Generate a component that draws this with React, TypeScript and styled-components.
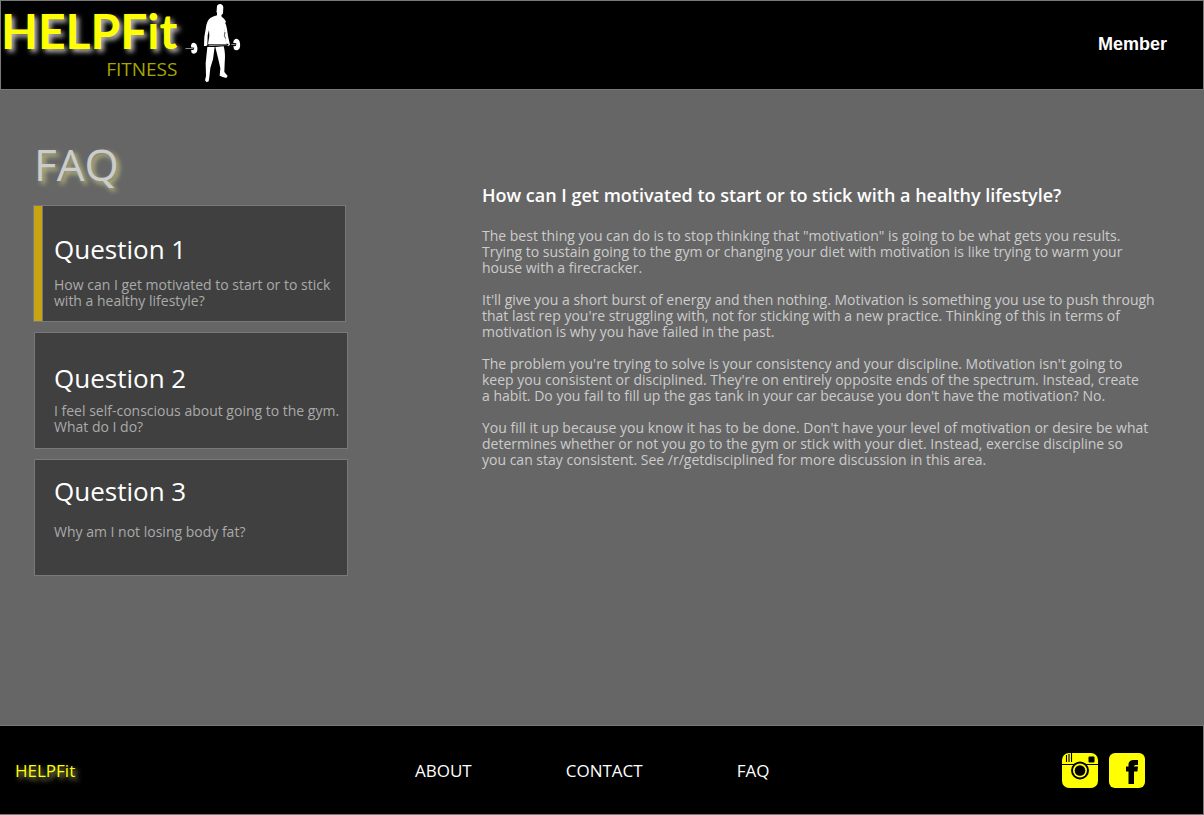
import React, { useState } from "react";
import styled, { createGlobalStyle } from "styled-components";

const GlobalStyle = createGlobalStyle`
  *, *::before, *::after { box-sizing: border-box; }
  body {
    margin: 0;
    background: #666;
    font-family: "Open Sans", "Liberation Sans", sans-serif;
    color: #fff;
  }
  h1, h2, p { margin: 0; }
`;

const Page = styled.div`
  display: flex;
  flex-direction: column;
  min-height: 100vh;
`;

const Header = styled.header`
  display: flex;
  align-items: center;
  justify-content: space-between;
  min-height: 90px;
  padding: 0 36px 0 0;
  background: #000;
  border: 1px solid #797979;
`;

const Brand = styled.a`
  display: flex;
  align-items: center;
  gap: 7px;
  text-decoration: none;
`;

const BrandWords = styled.span`
  display: flex;
  flex-direction: column;
  align-items: flex-end;
  padding-bottom: 4px;
`;

const BrandName = styled.span`
  font-family: Lato, sans-serif;
  font-size: 48px;
  font-weight: 700;
  line-height: 52px;
  color: #ff0;
  text-shadow: 3px 3px 5px rgba(255, 255, 255, 0.75);
`;

const BrandTag = styled.span`
  font-size: 19px;
  line-height: 24px;
  color: #a6a600;
`;

const MemberLink = styled.a`
  padding-bottom: 2px;
  font-family: "Liberation Sans", Arial, sans-serif;
  font-size: 18px;
  font-weight: 700;
  color: #fff;
  text-decoration: none;
`;

const Main = styled.main`
  display: flex;
  flex: 1;
  align-items: flex-start;
  gap: 134px;
  padding: 46px 48px 48px 34px;
`;

const Sidebar = styled.section`
  flex: 0 0 314px;
`;

const Title = styled.h1`
  font-size: 44px;
  font-weight: 500;
  line-height: 56px;
  color: #ccc;
  text-shadow: 3px 3px 5px rgba(255, 255, 153, 0.6);
`;

const Cards = styled.div`
  display: flex;
  flex-direction: column;
  gap: 10px;
  margin-top: 13px;
`;

const Card = styled.button<{ $active: boolean; $top: number; $gap: number }>`
  display: flex;
  flex-direction: column;
  align-items: flex-start;
  gap: ${(p) => p.$gap}px;
  height: 117px;
  margin: ${(p) => (p.$active ? "0 2px 0 -1px" : "0")};
  padding: ${(p) => p.$top}px 0 0 ${(p) => (p.$active ? 20 : 19)}px;
  background: #404040;
  border: 1px solid #797979;
  box-shadow: ${(p) => (p.$active ? "inset 8px 0 0 #c8a415, inset 9px 0 0 #797979" : "none")};
  font-family: inherit;
  text-align: left;
  cursor: pointer;
`;

const CardTitle = styled.span`
  font-size: 26px;
  line-height: 32px;
  color: #fff;
`;

const CardText = styled.span`
  font-size: 14px;
  line-height: 16px;
  white-space: nowrap;
  color: #aaa;
`;

const Answer = styled.article`
  flex: 1;
  padding-top: 47px;
`;

const AnswerTitle = styled.h2`
  font-size: 18px;
  font-weight: 600;
  line-height: 24px;
`;

const AnswerText = styled.p`
  margin-top: 16px;
  font-size: 14px;
  line-height: 16px;
  color: #ccc;

  ${AnswerTitle} + & { margin-top: 21px; }
`;

const Footer = styled.footer`
  display: flex;
  align-items: center;
  min-height: 90px;
  padding: 0 58px 0 15px;
  background: #000;
  border: solid #797979;
  border-width: 1px 1px 1px 0;
  font-size: 17px;
`;

const FooterBrand = styled.a`
  flex: 0 0 400px;
  color: #ff0;
  text-decoration: none;
  text-shadow: 3px 3px 5px rgba(255, 255, 153, 0.75);
`;

const FooterNav = styled.nav`
  display: flex;
  flex: 1;
  gap: 94px;
`;

const FooterLink = styled.a`
  color: #fff;
  text-decoration: none;
`;

const Social = styled.div`
  display: flex;
  gap: 11px;
`;

const SocialLink = styled.a`
  display: flex;
`;

const Lifter = () => (
  <svg width="60" height="88" viewBox="12 3 180 264" aria-hidden="true">
    <g fill="#fff">
      <path d="M111 17Q114 11 122 12Q130 14 130 22L129 40Q128 44 124 45L125 50Q133 54 138 65L136 68L134 90L139 134L84 133L88 108L87 90L83 106L82 138L72 138Q71 112 77 88Q79 62 92 53Q102 49 111 46L111 38Q108 35 110 32Z" />
      <path d="M132 82L137 70Q142 88 144 108L150 134L145 139L139 136L137 120L130 108L134 98Z" />
      <path d="M82 141L104 141L99 178L91 204L88 232L86 244L80 247L75 241L78 228L77 190Z" />
      <path d="M106 141L131 139Q137 160 134 190L133 216L143 228L139 234L128 231L119 227L121 205L116 182Z" />
      <path d="M36 130Q43 125 49 133Q55 147 50 157Q42 165 35 158L33 151L41 149L43 143L33 142Q32 134 36 130Z" />
      <path d="M163 119Q171 113 178 122Q183 136 178 146Q170 155 162 148L160 139L168 138L169 130L160 129Q159 123 163 119Z" />
    </g>
    <path d="M80 138L145 134" stroke="#000" strokeWidth="5" />
    <path d="M86 137L140 134M16 146L40 145M154 133L167 134" stroke="#ddd" strokeWidth="2" />
    <path d="M137 116Q130 108 135 96" fill="none" stroke="#000" strokeWidth="2" />
  </svg>
);

const InstagramIcon = () => (
  <svg width="36" height="35" viewBox="0 0 36 35" aria-hidden="true">
    <rect width="36" height="35" rx="7" fill="#ff0" />
    <path d="M4.5 2V9M7 1V9M9.5 0V9" stroke="#000" strokeWidth="1.1" />
    <path d="M0 11.5H36" stroke="#000" strokeWidth="1.2" />
    <rect x="26.5" y="3.5" width="6" height="6" rx="1" fill="#000" />
    <circle cx="18" cy="17.5" r="9" fill="#000" />
    <circle cx="18" cy="17.5" r="7" fill="#ff0" />
    <circle cx="18" cy="17.5" r="5.3" fill="#000" />
  </svg>
);

const FacebookIcon = () => (
  <svg width="36" height="35" viewBox="0 0 36 35" aria-hidden="true">
    <rect width="36" height="35" rx="6" fill="#ff0" />
    <path
      d="M19.5 31V18.5H17V13.5H19.5V11.5C19.5 8.5 21.5 7 24.5 7H29V12H26.5Q25 12 25 13.5H29L28.4 18.5H25V31Z"
      fill="#000"
    />
  </svg>
);

const questions = [
  { title: "Question 1", lines: ["How can I get motivated to start or to stick", "with a healthy lifestyle?"], top: 27, gap: 12 },
  { title: "Question 2", lines: ["I feel self-conscious about going to the gym.", "What do I do?"], top: 29, gap: 9 },
  { title: "Question 3", lines: ["Why am I not losing body fat?"], top: 15, gap: 17 },
];

const paragraphs = [
  [
    "The best thing you can do is to stop thinking that \"motivation\" is going to be what gets you results.",
    "Trying to sustain going to the gym or changing your diet with motivation is like trying to warm your",
    "house with a firecracker.",
  ],
  [
    "It'll give you a short burst of energy and then nothing. Motivation is something you use to push through",
    "that last rep you're struggling with, not for sticking with a new practice. Thinking of this in terms of",
    "motivation is why you have failed in the past.",
  ],
  [
    "The problem you're trying to solve is your consistency and your discipline. Motivation isn't going to",
    "keep you consistent or disciplined. They're on entirely opposite ends of the spectrum. Instead, create",
    "a habit. Do you fail to fill up the gas tank in your car because you don't have the motivation? No.",
  ],
  [
    "You fill it up because you know it has to be done. Don't have your level of motivation or desire be what",
    "determines whether or not you go to the gym or stick with your diet. Instead, exercise discipline so",
    "you can stay consistent. See /r/getdisciplined for more discussion in this area.",
  ],
];

const Lines = ({ lines }: { lines: string[] }) => (
  <>
    {lines.map((line, i) => (
      <React.Fragment key={line}>
        {i > 0 && <br />}
        {line}
      </React.Fragment>
    ))}
  </>
);

export default function App() {
  const [active, setActive] = useState(0);
  return (
    <Page>
      <GlobalStyle />
      <Header>
        <Brand href="#home">
          <BrandWords>
            <BrandName>HELPFit</BrandName>
            <BrandTag>FITNESS</BrandTag>
          </BrandWords>
          <Lifter />
        </Brand>
        <MemberLink href="#member">Member</MemberLink>
      </Header>
      <Main>
        <Sidebar>
          <Title>FAQ</Title>
          <Cards>
            {questions.map((q, i) => (
              <Card key={q.title} type="button" $active={i === active} $top={q.top} $gap={q.gap} onClick={() => setActive(i)}>
                <CardTitle>{q.title}</CardTitle>
                <CardText>
                  <Lines lines={q.lines} />
                </CardText>
              </Card>
            ))}
          </Cards>
        </Sidebar>
        <Answer>
          <AnswerTitle>How can I get motivated to start or to stick with a healthy lifestyle?</AnswerTitle>
          {paragraphs.map((lines) => (
            <AnswerText key={lines[0]}>
              <Lines lines={lines} />
            </AnswerText>
          ))}
        </Answer>
      </Main>
      <Footer>
        <FooterBrand href="#home">HELPFit</FooterBrand>
        <FooterNav>
          <FooterLink href="#about">ABOUT</FooterLink>
          <FooterLink href="#contact">CONTACT</FooterLink>
          <FooterLink href="#faq">FAQ</FooterLink>
        </FooterNav>
        <Social>
          <SocialLink href="#instagram" aria-label="Instagram">
            <InstagramIcon />
          </SocialLink>
          <SocialLink href="#facebook" aria-label="Facebook">
            <FacebookIcon />
          </SocialLink>
        </Social>
      </Footer>
    </Page>
  );
}
